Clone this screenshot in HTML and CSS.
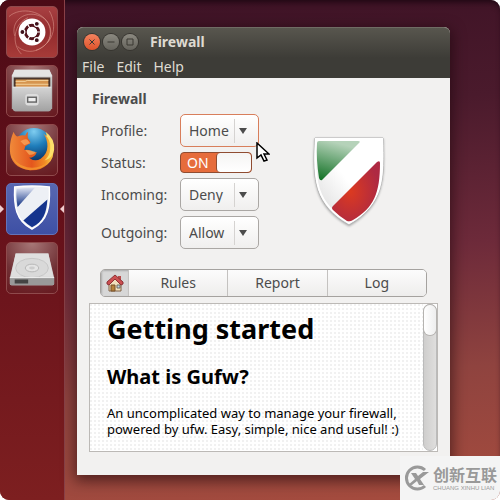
FILE: index.html
```html
<!DOCTYPE html>
<html lang="en">
<head>
  <meta charset="UTF-8">
  <meta name="viewport" content="width=device-width, initial-scale=1.0">
  <title>Firewall</title>
  <link rel="stylesheet" href="styles.css">
</head>
<body>

<div class="desktop">

  <nav class="launcher" aria-label="Launcher">
    <button class="tile tile-dash" aria-label="Dash">
      <svg viewBox="0 0 52 52">
        <g fill="none" stroke="#eeb4a6" stroke-opacity=".45">
          <path d="M8 30C4 16 16 5 30 8c14 3 20 18 12 29"/>
          <path d="M15 49C4 38 7 17 22 11"/>
          <path d="M44 4c8 14 6 31-11 40-8 4-17 2-22-3"/>
          <path d="M2 10C14-1 39 4 44 20c4 13-4 22-14 25"/>
        </g>
        <circle cx="26" cy="26" r="14" fill="#fff"/>
        <circle cx="26" cy="26" r="7" fill="none" stroke="#53141c" stroke-width="3"/>
        <g stroke="#fff" stroke-width="1.2" fill="#3d1018">
          <path d="M26 26h11M26 26l-5-9M26 26l-5 9"/>
          <circle cx="16" cy="26" r="2.6"/>
          <circle cx="31" cy="17.5" r="2.6"/>
          <circle cx="31" cy="34.5" r="2.6"/>
        </g>
        <circle cx="26" cy="26" r="5" fill="#fff"/>
      </svg>
    </button>

    <button class="tile" aria-label="Files">
      <svg viewBox="0 0 52 52">
        <defs>
          <linearGradient id="cabinet" x1="0" y1="0" x2="0" y2="1">
            <stop offset="0" stop-color="#d4d4d4"/>
            <stop offset="1" stop-color="#a2a2a2"/>
          </linearGradient>
        </defs>
        <path d="M8 4h36l3 6v34l-3 3H8l-3-3V10z" fill="url(#cabinet)"/>
        <path d="M8 4h36l3 7H5z" fill="#e4e4e4"/>
        <path d="M7 12h38v10H7z" fill="#49352c"/>
        <path d="M9 14h34v8H9z" fill="#d6954f"/>
        <path d="M9 16h10l2-1h22M9 19h34" stroke="#f4d39d" fill="none"/>
        <path d="M6 22h40v22q0 3-3 3H9q-3 0-3-3z" fill="url(#cabinet)"/>
        <path d="M6 22h40" stroke="#eee"/>
        <rect x="19" y="29" width="14" height="12" rx="3" fill="#ddd"/>
        <rect x="21.500" y="32.500" width="9" height="5" fill="#eee" stroke="#666" stroke-width="1.500"/>
      </svg>
    </button>

    <button class="tile" aria-label="Firefox">
      <svg viewBox="0 0 52 52">
        <defs>
          <radialGradient id="globe" cx=".5" cy=".1" r=".8">
            <stop offset="0" stop-color="#7fcdf0"/>
            <stop offset=".5" stop-color="#1f7dba"/>
            <stop offset="1" stop-color="#0b3469"/>
          </radialGradient>
          <linearGradient id="fox" x1="0" y1="0" x2="1" y2="0">
            <stop offset="0" stop-color="#f08a3a"/>
            <stop offset=".5" stop-color="#e4561d"/>
            <stop offset=".8" stop-color="#f08a24"/>
            <stop offset="1" stop-color="#fbd34a"/>
          </linearGradient>
        </defs>
        <circle cx="28" cy="22" r="19" fill="url(#globe)"/>
        <path d="M7 7q1 4 4 5 4-2 8-1 1-3 3-4-1 5 0 7 3 3 2 5l-5 3-1 4q4-1 7 1 3 2 6 1-2 6-8 6 6 5 12 1 7-5 7-13 0-8-4-13 8 5 10 14 2 12-6 18-8 7-18 6C10 46 3 37 3 26 3 17 5 11 7 7z" fill="url(#fox)"/>
        <path d="M38 9q8 6 7 15 0 8-6 13 8-2 10-11 1-12-9-19 2 3 1 5z" fill="#fde06a"/>
        <path d="M4 29q4 12 17 15 14 2 22-6-6 9-19 9Q8 45 4 29z" fill="#f6a030" opacity=".7"/>
        <path d="M14 17q4-3 7-2l3 4-6 2z" fill="#f7a35a" opacity=".8"/>
        <path d="M19 26q6 0 11 2-2 3-7 3z" fill="#f7b263" opacity=".7"/>
      </svg>
    </button>

    <div class="running">
      <button class="tile tile-active" aria-label="Firewall">
        <svg viewBox="0 0 52 52">
          <defs>
            <linearGradient id="blueTop" x1="0" y1="0" x2="0" y2="1">
              <stop offset="0" stop-color="#dce2f2"/>
              <stop offset="1" stop-color="#092b80"/>
            </linearGradient>
          </defs>
          <path d="M8 3q18-2 36 0c1 20-1 35-18 44C9 38 7 23 8 3z" fill="#edf0f5"/>
          <path d="M10 5q8-1 19-1L11 24Q9 13 10 5z" fill="url(#blueTop)"/>
          <path d="M17 38l25-22c-1 14-4 23-16 29q-5-3-9-7z" fill="#15348d"/>
          <path d="M8 3q18-2 36 0c1 20-1 35-18 44C9 38 7 23 8 3z" fill="none" stroke="#fff" stroke-width="1.500"/>
        </svg>
      </button>
    </div>

    <button class="tile" aria-label="Disk">
      <svg viewBox="0 0 52 52">
        <path d="M9 11h34l6 25v6q0 2-2 2H5q-2 0-2-2v-6z" fill="#d1d1d1"/>
        <path d="M9 11h34l5 24H4z" fill="#dfdfdf"/>
        <path d="M3 36h46v6q0 2-2 2H5q-2 0-2-2z" fill="#999"/>
        <path d="M8 38h14v4H8z" fill="#444"/>
        <ellipse cx="26" cy="26" rx="17" ry="10" fill="#d9d9d9" stroke="#c6c6c6"/>
        <ellipse cx="26" cy="26" rx="7" ry="4" fill="#e4e4e4" stroke="#b6b6b6"/>
        <ellipse cx="26" cy="26" rx="3" ry="1.500" fill="#ccc"/>
        <path d="M3 36h46" stroke="#f2f2f2"/>
      </svg>
    </button>
  </nav>

  <main class="workspace">
    <section class="window">

      <header class="chrome">
        <div class="titlebar">
          <button class="wm wm-close" aria-label="Close">
            <svg viewBox="0 0 16 16"><path d="M5.500 5.500l5 5M10.500 5.500l-5 5"/></svg>
          </button>
          <button class="wm" aria-label="Minimize">
            <svg viewBox="0 0 16 16"><path d="M4.500 8h7"/></svg>
          </button>
          <button class="wm" aria-label="Maximize">
            <svg viewBox="0 0 16 16"><path d="M5 5h6v6H5z"/></svg>
          </button>
          <h1 class="title">Firewall</h1>
        </div>
        <div class="menubar">
          <button class="menu">File</button>
          <button class="menu">Edit</button>
          <button class="menu">Help</button>
        </div>
      </header>

      <div class="content">
        <h2 class="section-title">Firewall</h2>

        <div class="settings">
          <form class="fields">
            <label for="profile">Profile:</label>
            <div class="combo combo-focus">
              <select id="profile">
                <option>Home</option>
                <option>Office</option>
                <option>Public</option>
              </select>
              <svg class="arrow" viewBox="0 0 8 6"><path d="M0 0h8L4 6z"/></svg>
              <svg class="pointer" viewBox="0 0 14 22"><path d="M1 1v15l4-3 3 6 3-1-3-6h5z" fill="#fff" stroke="#000" stroke-width="1.500"/></svg>
            </div>

            <label for="status">Status:</label>
            <div class="switch">
              <input type="checkbox" id="status" checked>
              <span class="switch-text">ON</span>
            </div>

            <label for="incoming">Incoming:</label>
            <div class="combo">
              <select id="incoming">
                <option>Deny</option>
                <option>Reject</option>
                <option>Allow</option>
              </select>
              <svg class="arrow" viewBox="0 0 8 6"><path d="M0 0h8L4 6z"/></svg>
            </div>

            <label for="outgoing">Outgoing:</label>
            <div class="combo">
              <select id="outgoing">
                <option>Allow</option>
                <option>Reject</option>
                <option>Deny</option>
              </select>
              <svg class="arrow" viewBox="0 0 8 6"><path d="M0 0h8L4 6z"/></svg>
            </div>
          </form>

          <svg class="shield" viewBox="0 0 72 90">
            <defs>
              <linearGradient id="base" x1="0" y1="1" x2="1" y2="0">
                <stop offset="0" stop-color="#d5d5d5"/>
                <stop offset=".5" stop-color="#fff"/>
              </linearGradient>
              <linearGradient id="green" x1=".3" y1="0" x2="0" y2="1">
                <stop offset="0" stop-color="#b5d2b9"/>
                <stop offset="1" stop-color="#0c6e20"/>
              </linearGradient>
              <radialGradient id="red" cx=".38" cy=".5" r=".6">
                <stop offset="0" stop-color="#dc3a20"/>
                <stop offset="1" stop-color="#ae2942"/>
              </radialGradient>
            </defs>
            <path d="M2 1h68c2 40 1 67-34 87C2 69-1 44 2 1z" fill="url(#base)" stroke="#b4b4b4"/>
            <path d="M3 2h66c2 39 1 65-33 84C3 67 0 43 3 2z" fill="none" stroke="#fff" stroke-width="2"/>
            <path d="M6 4h39q3 0 1 2L9 43q-2 1-3-2Q3 22 4 6q0-2 2-2z" fill="url(#green)"/>
            <path d="M20 69l44-44q3-2 3 1c0 30-6 45-27 57q-3 2-6 1-8-5-14-11-2-2 0-4z" fill="url(#red)"/>
          </svg>
        </div>

        <div class="tabs">
          <button class="tab tab-home" aria-label="Home">
            <svg viewBox="0 0 18 18">
              <path d="M3 9l6-6 6 6v8H3z" fill="#f0dfbd" stroke="#806044"/>
              <path d="M12 2h3v5h-3z" fill="#b94b4b"/>
              <path d="M1 10V8l8-7 8 7v2l-2 1-6-6-6 6z" fill="#cb4f51" stroke="#8e3236"/>
              <path d="M5 11h4v6H5z" fill="#b7833d" stroke="#76502a"/>
              <path d="M11 11h3v3h-3z" fill="#bad4e8" stroke="#71695c"/>
            </svg>
          </button>
          <button class="tab">Rules</button>
          <button class="tab">Report</button>
          <button class="tab">Log</button>
        </div>

        <div class="viewer">
          <article class="page">
            <h3 class="page-title">Getting started</h3>
            <h4 class="page-subtitle">What is Gufw?</h4>
            <p class="page-text">An uncomplicated way to manage your firewall, powered by ufw. Easy, simple, nice and useful! :)</p>
          </article>
          <div class="scrollbar"><div class="thumb"></div></div>
        </div>
      </div>

    </section>
  </main>

  <aside class="watermark">
    <svg class="watermark-logo" viewBox="0 0 26 26">
      <path d="M21 5A11 11 0 1 0 21 21" fill="none" stroke="#999" stroke-width="3"/>
      <path d="M7 8h5l2 3 5-4h6l-9 7 4 6h-5l-2-4-5 4H4l7-6z" fill="#999"/>
    </svg>
    <div>
      <div class="watermark-name" lang="zh">创新互联</div>
      <div class="watermark-latin">CHUANG XINHU LIAN</div>
    </div>
  </aside>

</div>

</body>
</html>
```
FILE: styles.css
```css
* {
  box-sizing: border-box;
}
body {
  margin: 0;
  background: #fff;
  font-family: "Noto Sans", "Open Sans", sans-serif;
  font-size: 14px;
  line-height: 16px;
  color: #4c4c4c;
}
button, select {
  font: inherit;
  color: inherit;
  margin: 0;
  padding: 0;
  border: none;
  background: none;
}
h1, h2, h3, h4, p {
  margin: 0;
}
svg {
  display: block;
}

.desktop {
  position: relative;
  display: flex;
  min-height: 100vh;
  border-radius: 9px;
  overflow: hidden;
  background: linear-gradient(175deg, #3d1225 0%, #4a1a2c 25%, #6d2a3a 52%, #8f433f 75%, #a64c3e 100%);
  box-shadow: inset 0 5px 6px -3px #1c0611;
}

/* launcher */
.launcher {
  flex: none;
  display: flex;
  flex-direction: column;
  gap: 7px;
  width: 65px;
  padding: 6px;
  border-right: 1px solid #894047;
  background: linear-gradient(#4b0b16, #65101a 40%, #7d1f20);
}
.tile {
  width: 52px;
  height: 52px;
  border: 1px solid #8f4a4c;
  border-radius: 5px;
  background: radial-gradient(circle at 50% 0, #a77777, #703035 60%, #67191f);
}
.tile svg {
  width: 50px;
  height: 50px;
}
.tile-dash {
  background: linear-gradient(#a84042, #922b2d 50%, #a73b39);
}
.tile-active {
  border-color: #6473b9;
  background: linear-gradient(#5867b1, #3e50a5);
}
.running {
  position: relative;
  display: flex;
}
.running::before,
.running::after {
  content: "";
  position: absolute;
  top: 22px;
  border: 4px solid transparent;
}
.running::before {
  left: -6px;
  border-left-color: #f0cdd0;
  border-right: none;
}
.running::after {
  right: -6px;
  border-right-color: #f0cdd0;
  border-left: none;
}

/* window */
.workspace {
  flex: 1;
  padding: 27px 50px 25px 12px;
}
.window {
  border-radius: 6px 6px 0 0;
  background: #f2f1f0;
  box-shadow: 0 4px 14px 2px rgba(20, 0, 5, .55);
}
.chrome {
  border-radius: 6px 6px 0 0;
  border-top: 1px solid #706c64;
  background: linear-gradient(#58564e, #3d3c37 60%);
  color: #dfdbd2;
}
.titlebar {
  display: flex;
  align-items: center;
  gap: 3px;
  height: 28px;
  padding: 0 7px;
}
.wm {
  width: 16px;
  height: 16px;
  border-radius: 50%;
  background: linear-gradient(#8b8980, #65635c);
  box-shadow: 0 0 0 1px #373530;
}
.wm-close {
  background: linear-gradient(#f3835f, #de522a);
}
.wm svg {
  fill: none;
  stroke: #3a3833;
}
.title {
  padding-left: 9px;
  font-size: 14px;
  line-height: 16px;
}
.menubar {
  display: flex;
  gap: 12px;
  height: 22px;
  padding: 0 5px;
}

.content {
  padding: 13px 12px 23px;
}
.section-title {
  padding-left: 3px;
  font-size: 14px;
  line-height: 16px;
}
.settings {
  display: flex;
  align-items: center;
  padding: 7px 0 20px 12px;
}
.fields {
  display: grid;
  grid-template-columns: 79px 79px;
  align-items: center;
  gap: 5px 0;
}
.combo {
  position: relative;
  display: grid;
  align-items: center;
}
.combo select {
  grid-area: 1 / 1;
  height: 33px;
  padding: 0 24px 0 8px;
  appearance: none;
  border: 1px solid #aaa7a4;
  border-radius: 5px;
  background: linear-gradient(#d5d3d1, #d5d3d1) right 23px center / 1px 24px no-repeat, linear-gradient(#fff, #f0efee);
}
.combo-focus select {
  border-color: #d87e5b;
}
.arrow {
  grid-area: 1 / 1;
  justify-self: end;
  width: 8px;
  height: 6px;
  margin-right: 12px;
  fill: #4c4c4c;
  pointer-events: none;
}
.pointer {
  position: absolute;
  top: 28px;
  left: 76px;
  width: 14px;
  height: 22px;
  z-index: 1;
  pointer-events: none;
}
.switch {
  display: grid;
  align-items: center;
  width: 72px;
  color: #fff;
}
.switch input {
  grid-area: 1 / 1;
  display: flex;
  justify-content: flex-end;
  width: 72px;
  height: 21px;
  margin: 0;
  appearance: none;
  border: 1px solid #8f4c31;
  border-radius: 4px;
  background: #e66c3b;
}
.switch input::before {
  content: "";
  width: 34px;
  border-left: 1px solid #8f4c31;
  border-radius: 4px;
  background: linear-gradient(#f5f4f3, #fff);
}
.switch-text {
  grid-area: 1 / 1;
  padding-left: 7px;
  pointer-events: none;
}
.shield {
  width: 72px;
  height: 90px;
  margin: 0 auto;
  filter: drop-shadow(0 1px 1px #aaa);
}

/* tabs */
.tabs {
  display: flex;
  height: 28px;
  margin: 0 11px 6px;
  border: 1px solid #a5a29f;
  border-radius: 5px;
  overflow: hidden;
}
.tab {
  flex: 1;
  border-left: 1px solid #c4c2c0;
  background: linear-gradient(#fcfcfc, #eeedec);
}
.tab-home {
  flex: none;
  width: 27px;
  padding-left: 5px;
  border-left: none;
  background: #d7d7d7;
  box-shadow: inset 1px 1px 2px #aaa;
}
.tab-home svg {
  width: 18px;
  height: 18px;
}

/* help viewer */
.viewer {
  display: flex;
  border: 1px solid #bcb9b6;
  background: #fff;
}
.page {
  flex: 1;
  padding: 9px 14px 14px 17px;
  color: #000;
  background: radial-gradient(circle at 1px 1px, #f1f1f1 1px, transparent 1px) 0 0 / 4px 4px;
}
.page-title {
  font-size: 27px;
  line-height: 32px;
}
.page-subtitle {
  padding: 20px 0 16px;
  font-size: 20px;
  line-height: 24px;
}
.page-text {
  font-size: 13px;
  line-height: 16px;
}
.scrollbar {
  flex: none;
  width: 14px;
  border: 1px solid #bbb;
  border-radius: 7px;
  background: linear-gradient(90deg, #cfcecd, #dfdedd);
}
.thumb {
  height: 30px;
  border-radius: 6px;
  background: linear-gradient(90deg, #fff, #eee);
  box-shadow: 0 0 0 1px #b5b3b0;
}

.watermark {
  position: absolute;
  right: 0;
  bottom: 0;
  display: flex;
  align-items: center;
  gap: 3px;
  padding: 8px 3px 8px 4px;
  background: #f4f4f4;
  color: #999;
}
.watermark-logo {
  width: 26px;
  height: 26px;
}
.watermark-name {
  font-family: "Noto Sans CJK SC", sans-serif;
  font-size: 16px;
  font-weight: bold;
  line-height: 20px;
}
.watermark-latin {
  font-family: "Liberation Sans", sans-serif;
  font-size: 6px;
  line-height: 8px;
  white-space: nowrap;
}
```
